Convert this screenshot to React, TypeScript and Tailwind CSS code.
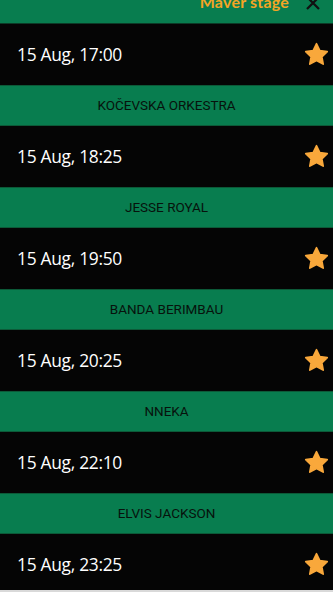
import React from 'react';

const slots = [
  { time: '15 Aug, 17:00', next: 'KOČEVSKA ORKESTRA' },
  { time: '15 Aug, 18:25', next: 'JESSE ROYAL' },
  { time: '15 Aug, 19:50', next: 'BANDA BERIMBAU' },
  { time: '15 Aug, 20:25', next: 'NNEKA' },
  { time: '15 Aug, 22:10', next: 'ELVIS JACKSON' },
  { time: '15 Aug, 23:25', next: '' },
];

function StarIcon() {
  return (
    <svg width="27" height="27" viewBox="0 0 24 24" className="shrink-0">
      <path
        d="M12 2.5l2.9 6 6.6.9-4.8 4.6 1.2 6.5L12 17.4l-5.9 3.1 1.2-6.5L2.5 9.4l6.6-.9z"
        fill="#f9a83b"
        stroke="#f9a83b"
        strokeWidth="1.6"
        strokeLinejoin="round"
      />
    </svg>
  );
}

export default function App() {
  return (
    <div className="w-[333px] h-[592px] bg-[#d9d9d9]">
      <div className="h-[590px] overflow-hidden font-['Open_Sans',sans-serif]">
        <div className="h-[24px] bg-[#087d4f] border-b border-[#0c3b27] flex items-end justify-end pr-[12px] overflow-hidden">
          <span className="text-[#f5a524] font-bold text-[16px] leading-none mb-[13px] mr-[16px] tracking-[0.2px] font-['Lato',sans-serif]">
            Maver stage
          </span>
          <svg width="16" height="16" viewBox="0 0 16 16" className="mb-[12px]">
            <path d="M2 2L14 14M14 2L2 14" stroke="#111" strokeWidth="2.2" />
          </svg>
        </div>
        {slots.map((s) => (
          <div key={s.time}>
            <div className="h-[61px] bg-[#050505] flex items-center justify-between pl-[17px] pr-[3px]">
              <span className="text-white text-[17.4px] tracking-[-0.3px]">{s.time}</span>
              <StarIcon />
            </div>
            {s.next && (
              <div className="h-[41px] bg-[#087d4f] border-y border-[#0c5a38] flex items-center justify-center">
                <span className="text-[#07120c] text-[13.5px] font-normal font-['Roboto',sans-serif]">{s.next}</span>
              </div>
            )}
          </div>
        ))}
      </div>
    </div>
  );
}
